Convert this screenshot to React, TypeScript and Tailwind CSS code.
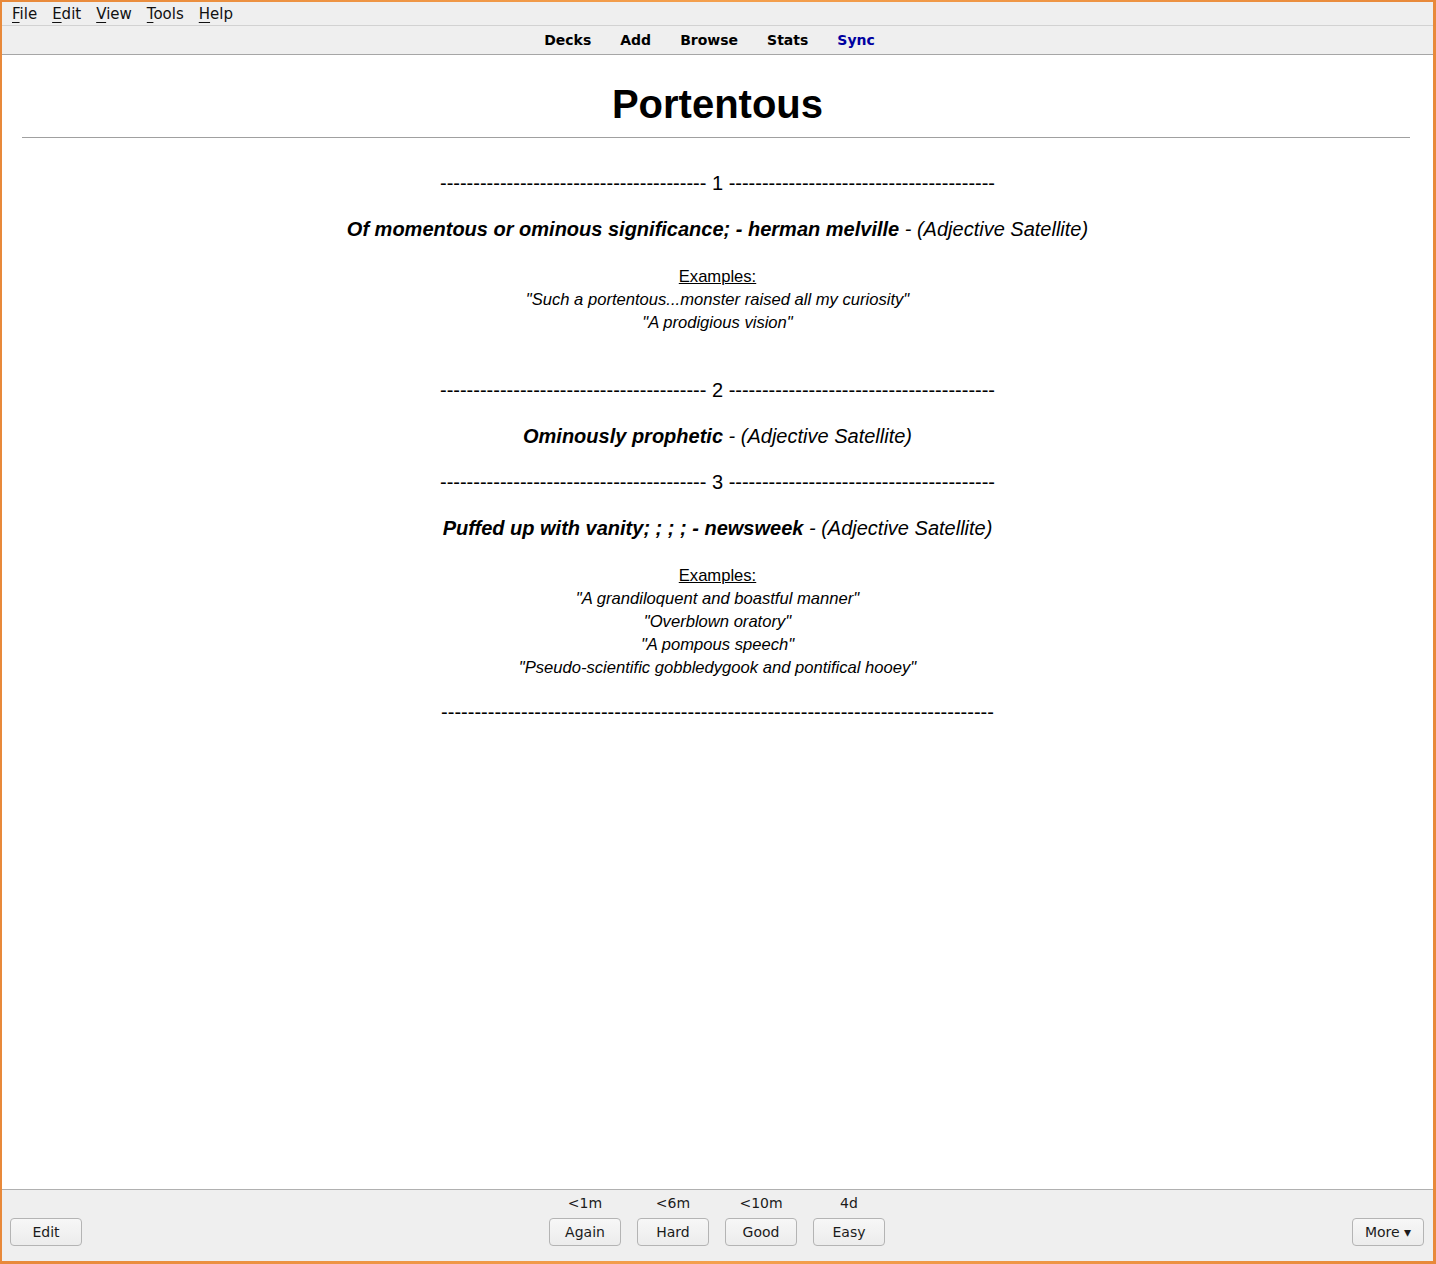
import React from "react";

const ui = { fontFamily: '"DejaVu Sans", sans-serif' };
const card = { fontFamily: '"Liberation Sans", Arial, sans-serif' };

const dashes = (n: number) => "-".repeat(n);

function Btn({ label, w = "w-[72px]" }: { label: string; w?: string }) {
  return (
    <div
      className={`${w} h-[28px] flex items-center justify-center rounded-[4px] border border-[#b4b4b4] bg-gradient-to-b from-[#f7f7f7] to-[#ececec] text-[14px] text-[#1b1b1b]`}
    >
      {label}
    </div>
  );
}

function MenuItem({ first, rest }: { first: string; rest: string }) {
  return (
    <span>
      <span className="underline underline-offset-[3px]">{first}</span>
      {rest}
    </span>
  );
}

export default function App() {
  return (
    <div className="w-[1436px] h-[1264px] bg-gradient-to-r from-[#e8893a] via-[#f4a04e] to-[#e8893a] pt-[2px] pl-[2px] pr-[3px] pb-[3px]">
      <div className="w-full h-full flex flex-col bg-white">
        {/* menubar */}
        <div
          style={ui}
          className="h-[24px] shrink-0 bg-[#efefef] border-b border-[#d2d2d2] flex items-center pt-[1px] pl-[10px] gap-[15px] text-[15px] text-[#111]"
        >
          <MenuItem first="F" rest="ile" />
          <MenuItem first="E" rest="dit" />
          <MenuItem first="V" rest="iew" />
          <MenuItem first="T" rest="ools" />
          <MenuItem first="H" rest="elp" />
        </div>
        {/* toolbar */}
        <div
          style={ui}
          className="h-[29px] shrink-0 bg-[#efefef] border-b border-[#a6a6a6] flex items-center justify-center gap-[29px] pr-[16px] text-[14px] font-bold text-black"
        >
          <span>Decks</span>
          <span>Add</span>
          <span>Browse</span>
          <span>Stats</span>
          <span className="text-[#0000a0]">Sync</span>
        </div>
        {/* card */}
        <div style={card} className="flex-1 bg-white text-black text-center text-[20px]">
          <div className="pt-[26px] h-[72px]">
            <div className="h-[46px] leading-[46px] text-[40px] font-bold">Portentous</div>
          </div>
          <div className="mt-[10px] ml-[20px] mr-[23px] h-px bg-[#a0a0a0]" />

          <div className="mt-[34px] leading-[23px] h-[23px]">
            {dashes(40)} 1 {dashes(40)}
          </div>
          <div className="mt-[23px] leading-[23px] h-[23px] italic">
            <b>Of momentous or ominous significance; - herman melville</b> - (Adjective Satellite)
          </div>
          <div className="mt-[24px] text-[16.6px] leading-[23px]">
            <div className="underline">Examples:</div>
            <div className="italic">"Such a portentous...monster raised all my curiosity"</div>
            <div className="italic">"A prodigious vision"</div>
          </div>

          <div className="mt-[45px] leading-[23px] h-[23px]">
            {dashes(40)} 2 {dashes(40)}
          </div>
          <div className="mt-[23px] leading-[23px] h-[23px] italic">
            <b>Ominously prophetic</b> - (Adjective Satellite)
          </div>

          <div className="mt-[23px] leading-[23px] h-[23px]">
            {dashes(40)} 3 {dashes(40)}
          </div>
          <div className="mt-[23px] leading-[23px] h-[23px] italic">
            <b>Puffed up with vanity; ; ; ; - newsweek</b> - (Adjective Satellite)
          </div>
          <div className="mt-[24px] text-[16.6px] leading-[23px]">
            <div className="underline">Examples:</div>
            <div className="italic">"A grandiloquent and boastful manner"</div>
            <div className="italic">"Overblown oratory"</div>
            <div className="italic">"A pompous speech"</div>
            <div className="italic">"Pseudo-scientific gobbledygook and pontifical hooey"</div>
          </div>

          <div className="mt-[22px] leading-[23px] h-[23px]">{dashes(83)}</div>
        </div>
        {/* bottom bar */}
        <div
          style={ui}
          className="h-[72px] shrink-0 bg-[#efefef] border-t border-[#b0b0b0] flex items-end pl-[8px] pb-[15px] pr-[9px] text-[14px] text-[#1b1b1b]"
        >
          <div className="flex-1 flex">
            <Btn label="Edit" />
          </div>
          <div className="flex gap-[16px]">
            {[
              ["<1m", "Again"],
              ["<6m", "Hard"],
              ["<10m", "Good"],
              ["4d", "Easy"],
            ].map(([t, l]) => (
              <div key={l} className="flex flex-col items-center">
                <div className="h-[17px] leading-[17px] mb-[6px] text-[14px]">{t}</div>
                <Btn label={l} />
              </div>
            ))}
          </div>
          <div className="flex-1 flex justify-end">
            <Btn label="More ▾" />
          </div>
        </div>
      </div>
    </div>
  );
}
